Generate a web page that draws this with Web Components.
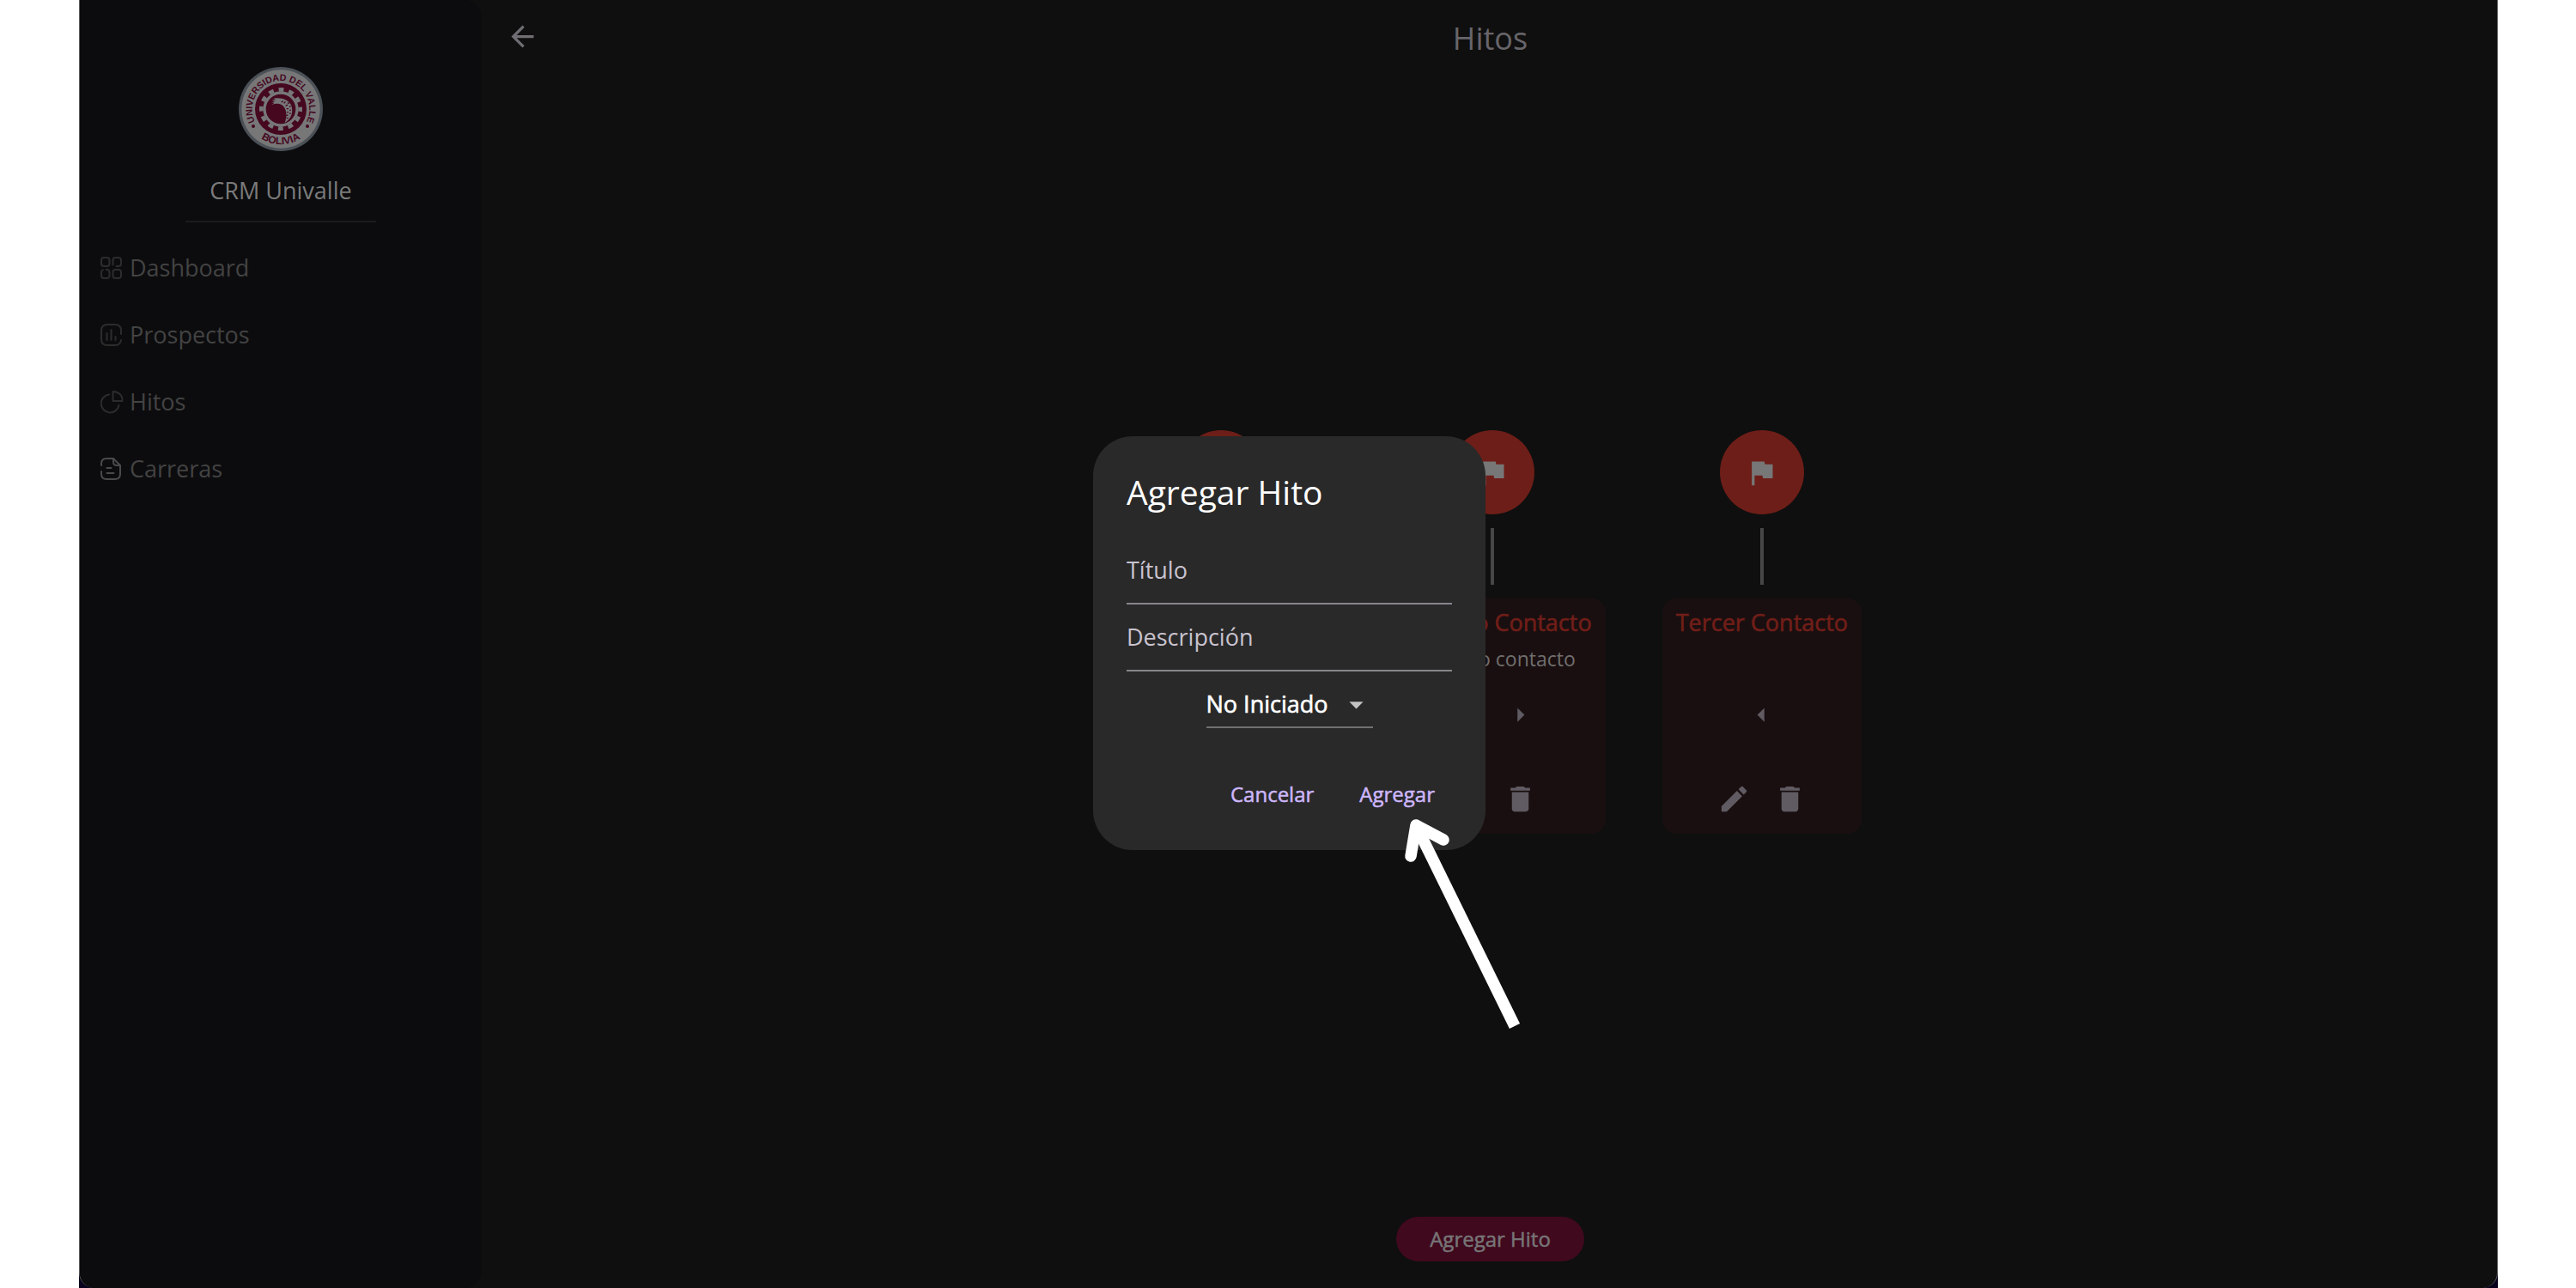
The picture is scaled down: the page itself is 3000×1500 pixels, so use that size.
<!DOCTYPE html>
<html lang="es">
<head>
<meta charset="utf-8">
<title>CRM Univalle</title>
<style>
  html, body { margin: 0; height: 100%; background: #fff; }
  body { font-family: "Open Sans", "Noto Sans", sans-serif; font-size: 27px; line-height: 36px; color: #7b7b7b; }
</style>
</head>
<body>
<crm-app>
  <crm-sidebar slot="sidebar">
    <nav-item icon="dashboard">Dashboard</nav-item>
    <nav-item icon="prospectos">Prospectos</nav-item>
    <nav-item icon="hitos">Hitos</nav-item>
    <nav-item icon="carreras" strong>Carreras</nav-item>
  </crm-sidebar>
  <milestone-page slot="page">
    <milestone-card right></milestone-card>
    <milestone-card heading="Segundo Contacto" left right>Segundo contacto</milestone-card>
    <milestone-card heading="Tercer Contacto" left></milestone-card>
  </milestone-page>
  <milestone-dialog slot="dialog"></milestone-dialog>
</crm-app>

<script>
const define = (name, render) => customElements.define(name, class extends HTMLElement {
  constructor() {
    super();
    this.attachShadow({ mode: "open" });
  }
  connectedCallback() {
    const template = document.createElement("template");
    template.innerHTML = render(this);
    this.shadowRoot.replaceChildren(template.content.cloneNode(true));
  }
});

const glyphs = {
  back: '<path d="M20 11H7.83l5.59-5.59L12 4l-8 8 8 8 1.41-1.41L7.83 13H20v-2z"/>',
  flag: '<path d="M14.4 6L14 4H5v17h2v-7h5.6l.4 2h7V6z"/>',
  right: '<path d="M10 17l5-5-5-5v10z"/>',
  left: '<path d="M14 7l-5 5 5 5V7z"/>',
  edit: '<path d="M3 17.25V21h3.75L17.81 9.94l-3.75-3.75L3 17.25zM20.71 7.04a1 1 0 0 0 0-1.41l-2.34-2.34a1 1 0 0 0-1.41 0l-1.83 1.83 3.75 3.75 1.83-1.83z"/>',
  trash: '<path d="M6 19c0 1.1.9 2 2 2h8c1.1 0 2-.9 2-2V7H6v12zM19 4h-3.5l-1-1h-5l-1 1H5v2h14V4z"/>',
  down: '<path d="M7 10l5 5 5-5H7z"/>'
};
const glyph = name => `<svg viewBox="0 0 24 24" width="39" height="39" fill="currentColor" aria-hidden="true">${glyphs[name]}</svg>`;

const navGlyphs = {
  dashboard: '<rect x="1" y="1" width="9.5" height="10" rx="3"/><path d="M14.5 9.5V4a3 3 0 0 1 3-3h3.500a3 3 0 0 1 3 3v4a3 3 0 0 1-3 3h-2.500"/><path d="M6.500 15H7.500a3 3 0 0 1 3 3v4a3 3 0 0 1-3 3H4a3 3 0 0 1-3-3v-4a3 3 0 0 1 2-2.800"/><rect x="14.500" y="15" width="9.500" height="10" rx="3"/>',
  prospectos: '<path d="M24 12V8c0-5-2-7-7-7H8C3 1 1 3 1 8v10c0 5 2 7 7 7h9c4.500 0 6.500-1.500 7-6"/><path d="M7.500 11v8M12.500 7v12M17.500 15v4"/>',
  hitos: '<path d="M14.500 1v11h11C26 5.500 21 1 14.500 1z"/><path d="M10 4.500A10.500 10.500 0 1 0 21.500 17"/>',
  carreras: '<path d="M1 9V7c0-4 2-6 6-6h8l8 8v10c0 4-2 6-6 6H7c-4 0-6-2-6-6v-3"/><path d="M15 1v4c0 3 1 4 4 4h3.500M7.500 12h5M7.500 18h8"/>'
};

define("crm-app", () => `
  <style>
    :host { display: block; height: 100%; padding: 0 91px 0 92px; box-sizing: border-box; }
    .backdrop { height: 100%; background: #08001c; }
    .window {
      position: relative; display: flex; gap: 2px; height: 100%; box-sizing: border-box; overflow: hidden;
      background: #0f0f0f; border: solid #5c5c5e; border-width: 0 1px; border-radius: 0 0 18px 18px;
    }
    ::slotted([slot="page"]) { flex: 1; min-width: 0; }
  </style>
  <div class="backdrop"><div class="window">
    <slot name="sidebar"></slot><slot name="page"></slot><slot name="dialog"></slot>
  </div></div>`);

define("crm-sidebar", () => `
  <style>
    :host {
      display: flex; flex-direction: column; width: 468px; flex: none; box-sizing: border-box;
      padding-top: 78px; background: #0c0c0e; border-radius: 0 20px 20px 0;
    }
    header { display: flex; flex-direction: column; align-items: center; }
    h2 { margin: 28px 0 17px; font-size: 27px; font-weight: 400; }
    hr { width: 222px; height: 2px; margin: 0; border: 0; background: #1b1b1d; }
    nav { display: flex; flex-direction: column; margin-top: 14px; padding-left: 24px; }
  </style>
  <header>
    <univalle-seal></univalle-seal>
    <h2>CRM Univalle</h2>
    <hr>
  </header>
  <nav><slot></slot></nav>`);

define("univalle-seal", () => `
  <style>
    :host { display: block; height: 98px; }
    text { font: bold 32px "Liberation Sans Narrow", "Liberation Sans", sans-serif; fill: #45081f; }
  </style>
  <svg viewBox="-147 -147 294 294" width="98" height="98" role="img" aria-label="Universidad del Valle Bolivia">
    <defs>
      <path id="upper" d="M-92 40 A100 100 0 1 1 92 40"/>
      <path id="lower" d="M-115 46 A124 124 0 0 0 115 46"/>
    </defs>
    <circle r="147" fill="#4b5157"/><circle r="137" fill="#777778"/>
    <circle r="90" fill="#45081f"/>
    <circle r="68" fill="none" stroke="#777778" stroke-width="14" pathLength="24" stroke-dasharray="1 1" stroke-dashoffset="0.5"/>
    <circle r="57" fill="none" stroke="#777778" stroke-width="10"/>
    <path d="M-32-24l11-1-10-7 14 1-8-6C0-42 28-34 37-12 44 12 38 32 14 48 22 28 21 8 12-6 2-19-12-22-32-14l9-7z" fill="#777778"/>
    <path d="M2-24l6-4M11-20l5-6M17-11l7-4M24-19l5-3M20-1h7M30-8l5-2M21 11h6M31 4h5M19 23l6-2M30 16l5-1M20 33l6-3" stroke="#45081f" stroke-width="4" fill="none"/>
    <circle cx="-96" cy="60" r="6" fill="#45081f"/><circle cx="93" cy="60" r="6" fill="#45081f"/>
    <text text-anchor="middle"><textPath href="#upper" startOffset="50%">UNIVERSIDAD DEL VALLE</textPath></text>
    <text text-anchor="middle" style="font-size:36px"><textPath href="#lower" startOffset="50%">BOLIVIA</textPath></text>
  </svg>`);

define("nav-item", host => `
  <style>
    :host { display: block; }
    a { display: flex; align-items: center; gap: 7px; height: 78px; color: #434343; text-decoration: none; font-size: 27px; }
    svg { flex: none; color: #2c2c2c; }
    :host([strong]) svg { color: #4a4a4a; }
  </style>
  <a href="#${host.getAttribute("icon")}">
    <svg viewBox="0 0 27 27" width="27" height="27" fill="none" stroke="currentColor" stroke-width="2" stroke-linecap="round" stroke-linejoin="round" aria-hidden="true">${navGlyphs[host.getAttribute("icon")]}</svg>
    <slot></slot>
  </a>`);

define("milestone-page", () => `
  <style>
    :host { display: flex; flex-direction: column; align-items: center; box-sizing: border-box; padding-bottom: 31px; }
    header { display: grid; grid-template-columns: 90px 1fr 90px; align-items: center; align-self: stretch; height: 90px; color: #67656a; }
    h1 { margin: 0; font-size: 36px; font-weight: 400; text-align: center; }
    button { font: inherit; border: 0; cursor: pointer; }
    .back { display: grid; place-items: center; height: 84px; align-self: start; padding: 0; background: none; color: #706e73; }
    .flow { display: flex; flex: 1; align-items: center; gap: 66px; margin-bottom: 35px; }
    ::slotted(:first-child) { min-width: 238px; }
    .add { height: 52px; padding: 0 39px; border-radius: 26px; background: #40091e; color: #777577; font-size: 24px; font-weight: 500; -webkit-text-stroke: 0.5px; }
  </style>
  <header><button class="back" aria-label="Volver">${glyph("back")}</button><h1>Hitos</h1></header>
  <div class="flow"><slot></slot></div>
  <button class="add">Agregar Hito</button>`);

define("milestone-card", host => `
  <style>
    :host { display: flex; flex-direction: column; align-items: center; gap: 16px; }
    .dot { display: grid; place-items: center; width: 98px; height: 98px; border-radius: 50%; background: #6e1e18; color: #777; }
    .stem { width: 4px; height: 66px; background: #474747; }
    article {
      display: flex; flex-direction: column; align-items: center; box-sizing: border-box; height: 274px;
      padding: 8px 16px; border-radius: 16px; background: #1a0f10;
    }
    h3 { margin: 0; height: 39px; font-size: 27px; line-height: 39px; font-weight: 500; -webkit-text-stroke: 0.6px; color: #711e18; }
    p { margin: 7px 0 16px; height: 33px; font-size: 23px; line-height: 33px; color: #706e6e; }
    .row { display: flex; }
    .row + .row { margin-top: 33px; }
    button { display: grid; place-items: center; width: 65px; height: 65px; padding: 0; border: 0; background: none; color: #605b62; cursor: pointer; }
  </style>
  <div class="dot">${glyph("flag")}</div>
  <div class="stem"></div>
  <article>
    <h3>${host.getAttribute("heading") || ""}</h3>
    <p><slot></slot></p>
    <div class="row">
      ${host.hasAttribute("left") ? `<button aria-label="Mover a la izquierda">${glyph("left")}</button>` : ""}
      ${host.hasAttribute("right") ? `<button aria-label="Mover a la derecha">${glyph("right")}</button>` : ""}
    </div>
    <div class="row">
      <button aria-label="Editar">${glyph("edit")}</button>
      <button aria-label="Eliminar">${glyph("trash")}</button>
    </div>
  </article>`);

define("text-field", host => `
  <style>
    :host { display: grid; height: 78px; box-sizing: border-box; border-bottom: 2px solid #88848c; }
    label, input { grid-area: 1 / 1; align-self: center; }
    label { color: #c9c3cf; font-size: 27px; pointer-events: none; }
    input { width: 100%; height: 100%; box-sizing: border-box; padding: 0; border: 0; outline: 0; background: none; color: #fff; font: inherit; }
  </style>
  <input id="field" type="text">
  <label for="field">${host.getAttribute("label")}</label>`);

define("milestone-dialog", () => `
  <style>
    :host { position: absolute; inset: 0 0 2px 2px; display: grid; place-items: center; }
    section {
      position: relative; display: flex; flex-direction: column; box-sizing: border-box; width: 457px;
      padding: 39px; border-radius: 46px; background: #292929; color: #fff;
    }
    h2 { margin: 0 0 27px; font-size: 39px; line-height: 52px; font-weight: 400; }
    .choice { position: relative; align-self: center; display: flex; width: 194px; margin: 12px 0; }
    select {
      appearance: none; width: 100%; height: 54px; padding: 0; border: 0; border-bottom: 2px solid #707070; border-radius: 0;
      background: none; color: #fff; font: inherit; font-size: 27px; font-weight: 500; -webkit-text-stroke: 0.6px; outline: 0;
    }
    .choice svg { position: absolute; right: 0; top: 7px; color: #c2c2c2; pointer-events: none; }
    footer { display: flex; justify-content: flex-end; gap: 13px; margin-top: 39px; }
    button { height: 52px; padding: 0 20px; border: 0; background: none; color: #cdb6fb; font: inherit; font-size: 24px; font-weight: 500; -webkit-text-stroke: 0.5px; cursor: pointer; }
    .pointer { position: absolute; left: 360px; top: 441px; }
  </style>
  <section role="dialog" aria-labelledby="title">
    <h2 id="title">Agregar Hito</h2>
    <text-field label="Título"></text-field>
    <text-field label="Descripción"></text-field>
    <div class="choice">
      <select aria-label="Estado"><option>No Iniciado</option><option>En Progreso</option><option>Completado</option></select>
      ${glyph("down")}
    </div>
    <footer><button>Cancelar</button><button>Agregar</button></footer>
    <svg class="pointer" width="150" height="260" viewBox="0 0 150 260" fill="none" stroke="#fff" stroke-width="13.500" aria-hidden="true">
      <path d="M16 12L131 246"/>
      <path d="M10 48L16 12L48 29" stroke-linecap="round" stroke-linejoin="round"/>
    </svg>
  </section>`);
</script>
</body>
</html>
